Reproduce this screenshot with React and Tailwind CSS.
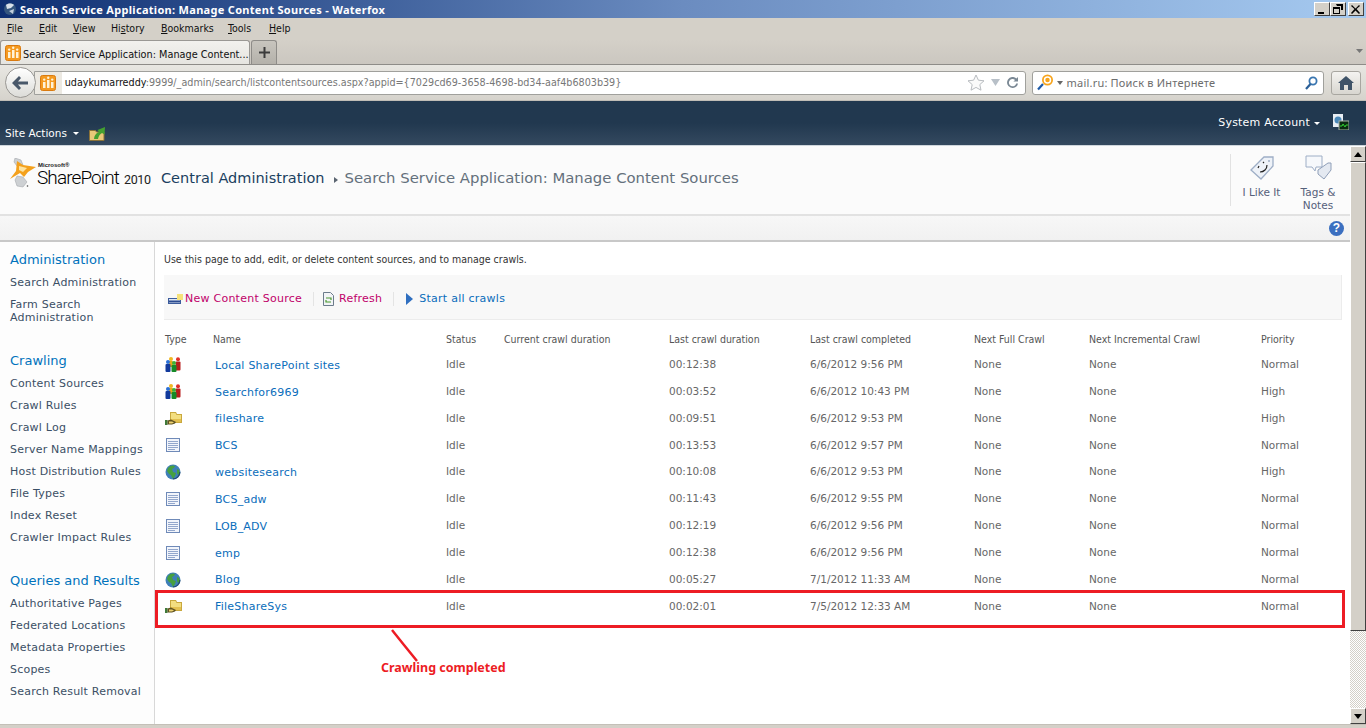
import React from "react";

const Verdana = { fontFamily: '"DejaVu Sans", sans-serif' };
const Tahoma = { fontFamily: '"DejaVu Sans Condensed", "DejaVu Sans", sans-serif', fontStretch: "condensed" };

function PeopleIcon() {
  return (
    <svg width="16" height="15" viewBox="0 0 16 15">
      <circle cx="6" cy="2" r="2" fill="#f0b820" />
      <rect x="4" y="4" width="4" height="6" rx="1" fill="#e8a818" />
      <circle cx="13" cy="2.200" r="2" fill="#e03028" />
      <rect x="10.500" y="4.500" width="5" height="9" rx="1" fill="#b81c1c" />
      <circle cx="3" cy="5" r="2" fill="#2a70d8" />
      <rect x="0.500" y="7" width="5" height="8" rx="1" fill="#123a9c" />
      <circle cx="9" cy="6" r="2" fill="#40b038" />
      <rect x="6.500" y="8" width="5" height="7" rx="1" fill="#168a28" />
    </svg>
  );
}

function ShareIcon() {
  return (
    <svg width="17" height="15" viewBox="0 0 17 15">
      <path d="M5 1h6l1 2h5v9H5z" fill="#c9a83e" />
      <path d="M6 2h4.500l1 2H16v7H6z" fill="#f3de80" />
      <path d="M6 8h10v3H6z" fill="#e3c050" />
      <path d="M0 9h2.500v5H0z" fill="#3f7a3a" />
      <path d="M2.500 9.500L6 8.500l3 1.500 2 1-1 1.500-3 1H2.500z" fill="#5f5220" />
      <path d="M4 10.500h3l2 1-2 1H4z" fill="#ecd070" />
    </svg>
  );
}

function DocIcon() {
  return (
    <svg width="14" height="14" viewBox="0 0 14 14" className="ml-[1px]">
      <rect x="0.500" y="0.500" width="13" height="13" fill="#f2f5fb" stroke="#6f8ab8" />
      <path d="M2 3.500h10M2 5.500h10M2 7.500h10M2 9.500h10M2 11.500h7" stroke="#93a7cc" strokeWidth="1" />
    </svg>
  );
}

function GlobeIcon() {
  return (
    <svg width="16" height="16" viewBox="0 0 16 16">
      <circle cx="8" cy="8" r="7.500" fill="#3f7fb8" />
      <path d="M3 4c2-3 6-3 7-2L9 4 7 5l1 3 3 1-1 3-2 3-2-4-2-1-2-3z" fill="#46a040" />
      <path d="M12 5l2 1 1 3-2 2-1-2z" fill="#46a040" />
      <path d="M8 15.500a7.500 7.500 0 0 0 7.500-7.500h-1.200A6.300 6.300 0 0 1 8 14.300z" fill="#1e3f66" opacity="0.8" />
    </svg>
  );
}

function AppFavicon({ size = 16 }) {
  return (
    <svg width={size} height={size} viewBox="0 0 16 16" className="shrink-0">
      <rect x="0.500" y="0.500" width="15" height="15" rx="2" fill="#f59a20" stroke="#d97a10" />
      <rect x="3" y="7" width="2.500" height="6" fill="#fff3d8" />
      <rect x="7" y="5" width="2.500" height="8" fill="#fff3d8" />
      <rect x="11" y="7" width="2.500" height="6" fill="#fff3d8" />
      <circle cx="4.200" cy="4.600" r="1.200" fill="#fff3d8" />
      <circle cx="8.200" cy="2.800" r="1.200" fill="#fff3d8" />
      <circle cx="12.200" cy="4.600" r="1.200" fill="#fff3d8" />
    </svg>
  );
}

function U({ children }) {
  return <span className="underline underline-offset-1">{children}</span>;
}

function TitleBar() {
  return (
    <div className="h-[18px] flex items-center bg-gradient-to-r from-[#0f2f72] via-[#6b8cc0] to-[#a6caf0] pr-[2px]">
      <svg className="ml-[3px]" width="14" height="14" viewBox="0 0 14 14">
        <circle cx="7" cy="7" r="6" fill="#35567f" />
        <path d="M3 3c2-2 6-2 8 0L8 6 4 7z" fill="#d8e0ea" />
        <path d="M6 9l5-2-1 5z" fill="#c4d0de" />
      </svg>
      <span className="ml-[3px] text-[11px] font-bold leading-none text-white tracking-[0.3px]" style={{ fontFamily: '"Noto Sans", sans-serif' }}>
        Search Service Application: Manage Content Sources - Waterfox
      </span>
      <div className="ml-auto flex items-center gap-0">
        {[
          <path key="a" d="M2 9h6v2H2z" fill="#000" />,
          <path key="b" d="M4 1h7v6H9V3H5zM1 4h7v7H1zm1 2v4h5V6z" fill="#000" fillRule="evenodd" />,
          <path key="c" d="M2 2l3.500 3.500L9 2l1 1-3.500 3L10 10l-1 1-3.500-3.500L2 11l-1-1 3.500-4L1 3z" fill="#000" />,
        ].map((p, i) => (
          <span key={i} className={`h-[14px] ${i === 1 ? "w-[16px] mr-[2px]" : "w-[16px]"} bg-[#d4d0c8] border border-t-white border-l-white border-r-[#404040] border-b-[#404040] flex items-center justify-center`}>
            <svg width="12" height="12" viewBox="0 0 12 12">{p}</svg>
          </span>
        ))}
      </div>
    </div>
  );
}

function MenuBar() {
  return (
    <div className="h-[22px] bg-[#d4d0c8] flex items-center pl-[7px] text-[10.500px] text-[#111]" style={Tahoma}>
      <span className="w-[32px]"><U>F</U>ile</span>
      <span className="w-[34px]"><U>E</U>dit</span>
      <span className="w-[38px]"><U>V</U>iew</span>
      <span className="w-[50px]">Hi<U>s</U>tory</span>
      <span className="w-[67px]"><U>B</U>ookmarks</span>
      <span className="w-[41px]"><U>T</U>ools</span>
      <span><U>H</U>elp</span>
    </div>
  );
}

function TabBar() {
  return (
    <div className="h-[25px] bg-gradient-to-b from-[#d4d0c8] to-[#cbc7c0] border-b border-[#8e8c88] flex items-end relative">
      <div className="h-[24px] w-[250px] shrink-0 overflow-hidden bg-gradient-to-b from-[#f2f1ee] to-[#e6e5e0] border border-b-0 border-[#9a9894] rounded-t-[3px] flex items-center pl-[4px] gap-[2px]">
        <AppFavicon />
        <span className="text-[10.800px] leading-[13px] pt-[3px] text-[#111] whitespace-nowrap" style={Tahoma}>
          Search Service Application: Manage Content...
        </span>
      </div>
      <div className="h-[24px] w-[26px] ml-[1px] bg-gradient-to-b from-[#c8c5be] to-[#b4b1aa] border border-b-0 border-[#8e8c88] rounded-t-[3px] flex items-center justify-center">
        <svg width="11" height="11" viewBox="0 0 11 11"><path d="M4.500 0h2v4.500H11v2H6.500V11h-2V6.500H0v-2h4.500z" fill="#3c3c3c" /></svg>
      </div>
      <svg className="ml-auto mr-[3px] mb-[11px]" width="7" height="4" viewBox="0 0 7 4"><path d="M0 0h7L3.500 4z" fill="#777" /></svg>
    </div>
  );
}

function NavBar() {
  return (
    <div className="h-[36px] bg-gradient-to-b from-[#e8e7e2] to-[#d6d3cc] border-b border-[#c0bdb6] flex items-center pl-[5px] pr-[5px]">
      <div className="relative z-10 w-[31px] h-[31px] rounded-full bg-gradient-to-b from-white to-[#dcdcd8] border border-[#9a9894] flex items-center justify-center">
        <svg width="16" height="14" viewBox="0 0 16 14"><path d="M7 0l2 2-3 3.500h10v3H6l3 3.500-2 2L0 7z" fill="#49586a" /></svg>
      </div>
      <div className="ml-[-2px] h-[24px] w-[1000px] bg-white border border-[#a0a09c] rounded-r-[3px] flex items-center">
        <span className="w-[27px] h-[22px] bg-[#ece9e2] flex items-center justify-center"><AppFavicon /></span>
        <span className="ml-[3px] text-[10.700px] pt-[1px] whitespace-nowrap text-[#777]" style={Tahoma}>
          <span className="text-[#111]">udaykumarreddy</span>:9999/_admin/search/listcontentsources.aspx?appid={"{"}7029cd69-3658-4698-bd34-aaf4b6803b39{"}"}
        </span>
        <div className="ml-auto flex items-center pr-[7px]">
          <svg width="18" height="17" viewBox="0 0 18 17"><path d="M9 1l2.400 5.200 5.600.6-4.200 3.800 1.200 5.600L9 13.400 4 16.200l1.200-5.600L1 6.800l5.600-.6z" fill="#fafafa" stroke="#b8bcc0" /></svg>
          <svg className="ml-[6px]" width="9" height="7" viewBox="0 0 9 7"><path d="M0 0h9L4.500 7z" fill="#b8c0c8" /></svg>
          <svg className="ml-[7px]" width="11" height="11" viewBox="0 0 12 12"><path d="M10 7a4 4 0 1 1-1.200-3.800L7 5h5V0l-1.700 1.700A6 6 0 1 0 12 7z" fill="#7a8894" /></svg>
        </div>
      </div>
      <div className="ml-[6px] h-[24px] w-[295px] bg-white border border-[#a0a09c] rounded-[3px] flex items-center pl-[4px] pr-[5px]">
        <svg width="17" height="17" viewBox="0 0 17 17">
          <circle cx="10.500" cy="6" r="5.500" fill="#f7a41c" />
          <circle cx="10.500" cy="6" r="3" fill="none" stroke="#fff" strokeWidth="1.500" />
          <path d="M6 10l-5 5.500" stroke="#1d5aa8" strokeWidth="2.200" />
        </svg>
        <svg className="ml-[3px]" width="6" height="4" viewBox="0 0 6 4"><path d="M0 0h6L3 4z" fill="#666" /></svg>
        <span className="ml-[4px] text-[11px] tracking-[0.2px] text-[#6d6d6d] whitespace-nowrap translate-y-[1px]" style={{ fontFamily: '"Noto Sans", sans-serif' }}>mail.ru: Поиск в Интернете</span>
        <svg className="ml-auto" width="13" height="14" viewBox="0 0 13 14">
          <circle cx="8" cy="5" r="3.600" fill="none" stroke="#3a76b0" strokeWidth="1.800" />
          <path d="M5.500 8L1 13" stroke="#2a5f98" strokeWidth="2.200" />
        </svg>
      </div>
      <div className="ml-[7px] h-[24px] w-[30px] bg-gradient-to-b from-[#f4f3f0] to-[#d8d6d0] border border-[#a8a6a0] rounded-[3px] flex items-center justify-center">
        <svg width="16" height="14" viewBox="0 0 16 14"><path d="M8 0l8 7h-2v7h-4V9H6v5H2V7H0z" fill="#3f5368" /></svg>
      </div>
    </div>
  );
}

function SiteBar() {
  return (
    <div className="h-[45px] bg-gradient-to-b from-[#21384f] via-[#21384f] to-[#34495f] flex text-[11px] text-white border-b border-[#cfd6dc]" style={Verdana}>
      <div className="pl-[5px] pt-[25px] flex items-start">
        <span className="text-[10.500px] leading-[15px]">Site Actions</span>
        <svg className="ml-[6px] mt-[6px]" width="6" height="3" viewBox="0 0 6 3"><path d="M0 0h6L3 3z" fill="#fff" /></svg>
        <svg className="ml-[10px] mt-[0px]" width="17" height="15" viewBox="0 0 17 15">
          <path d="M.5 4.500h6l1 1.500h7.500v8.500H.5z" fill="#e8c878" stroke="#8a7238" />
          <path d="M5 13c0-3 2-6 5-7L8.500 4 16 1l-.5 7.500L13 7c-2 1-3.500 3-4 6z" fill="#44a030" />
        </svg>
      </div>
      <div className="ml-auto pr-[17px] pt-[14px] flex items-start">
        <span className="tracking-[0.2px]">System Account</span>
        <svg className="ml-[4px] mt-[7px]" width="6" height="3" viewBox="0 0 6 3"><path d="M0 0h6L3 3z" fill="#fff" /></svg>
        <svg className="ml-[12px] mt-[-1px]" width="17" height="16" viewBox="0 0 17 16">
          <rect x="1" y="0" width="10" height="13" fill="#e8eef4" />
          <circle cx="6" cy="6" r="3.500" fill="#4a88b8" />
          <rect x="7" y="7" width="10" height="9" fill="#0a2a10" stroke="#aab4a8" />
          <path d="M8 12h2l1-2 2 3 1-2h2" stroke="#30d030" fill="none" />
        </svg>
      </div>
    </div>
  );
}

function SharePointLogo() {
  const logoFont = { fontFamily: 'Roboto, sans-serif' };
  return (
    <div className="relative w-[152px] h-[38px]">
      <svg width="28" height="30" viewBox="0 0 28 30" className="absolute left-[9px] top-[0px]">
        <path d="M6 0l6 2 2 5-6 1-3-4z" fill="#cdd0d3" stroke="#9a9ea2" strokeWidth="0.500" />
        <path d="M8 18l6 1 4 5-4 5-6-1-2-6z" fill="#cdd0d3" stroke="#9a9ea2" strokeWidth="0.500" />
        <path d="M8 3l6 4 13 2-8 5-4 5-4-4-10 6 6-8z" fill="#f4a11d" />
        <path d="M10 8l8 2-4 4-4-2z" fill="#fde3a0" />
        <circle cx="18.500" cy="28" r="0.800" fill="#444" />
      </svg>
      <span className="absolute left-[38px] top-[4px] text-[6px] font-bold leading-none text-[#222]" style={{ fontFamily: '"Liberation Sans", sans-serif' }}>Microsoft®</span>
      <span className="absolute left-[37px] top-[12px] text-[19px] leading-[15px] font-light text-black tracking-[-0.9px] whitespace-nowrap" style={logoFont}>
        SharePoint
      </span>
      <span className="absolute left-[124px] top-[15px] text-[12.500px] leading-[13px] text-[#222] tracking-[-0.4px]" style={logoFont}>2010</span>
    </div>
  );
}

function HeaderArea() {
  return (
    <div>
      <div className="h-[70px] bg-[#fbfbfb] border-b-2 border-[#e2e2e2] flex" style={Verdana}>
        <div className="pt-[12px]"><SharePointLogo /></div>
        <div className="ml-[9px] pt-[23px] flex items-start leading-[18px] whitespace-nowrap">
          <span className="text-[14.500px] text-[#1a3f5f]">Central Administration</span>
          <svg className="ml-[9px] mt-[8px]" width="4" height="6" viewBox="0 0 4 6"><path d="M0 0l4 3-4 3z" fill="#5a6470" /></svg>
          <span className="ml-[7px] text-[14.850px] text-[#64707c]">Search Service Application: Manage Content Sources</span>
        </div>
        <div className="ml-auto my-[8px] w-[120px] border-l border-[#e2e2e2] flex text-[10.500px] text-[#55607a] text-center leading-[13px]">
          <div className="w-[61px] flex flex-col items-center">
            <svg width="26" height="28" viewBox="0 0 26 28" className="shrink-0">
              <path d="M2 16L15 3l9 0 0 9-12 13z" fill="#eef2f8" stroke="#9eaec6" strokeWidth="1.300" />
              <circle cx="20" cy="7" r="1" fill="#9eaec6" />
              <path d="M9 14l1-2M14 9l1-1M11 18c4 0 7-3 7-7" stroke="#222" strokeWidth="1.200" fill="none" />
            </svg>
            <span className="mt-[4px]">I Like It</span>
          </div>
          <div className="w-[52px] flex flex-col items-center">
            <svg width="28" height="28" viewBox="0 0 28 28" className="shrink-0">
              <path d="M2 2h16v11h-6l-1 4-3-4H2z" fill="#f6f8fb" stroke="#9eaec6" />
              <path d="M14 20v-4l10-7 3 0 0 7-7 9z" fill="#e4e9f1" stroke="#8f9fb8" />
            </svg>
            <span className="mt-[4px]">Tags &<br />Notes</span>
          </div>
        </div>
      </div>
      <div className="h-[26px] bg-gradient-to-b from-[#f7f7f7] to-[#f1f1f1] border-b-2 border-[#c8c8c8] flex items-center justify-end pr-[6px]">
        <span className="w-[15px] h-[15px] rounded-full bg-[#3b6fc0] text-white text-[12px] font-bold leading-[15px] text-center" style={{ fontFamily: '"Liberation Sans", sans-serif' }}>?</span>
      </div>
    </div>
  );
}

function Heading({ children, className = "" }) {
  return <div className={`text-[13px] leading-[16px] text-[#0072bc] ${className}`}>{children}</div>;
}

function NavItem({ children, first }) {
  return <div className={`text-[11px] leading-[13px] text-[#3b4f65] tracking-[0.22px] ${first ? "mt-[8px]" : "mt-[9px]"}`}>{children}</div>;
}

function LeftNav() {
  return (
    <div className="w-[155px] shrink-0 border-r border-[#d8d8d8] bg-[#fdfdfd] pl-[10px] pt-[10px] whitespace-nowrap" style={Verdana}>
      <Heading>Administration</Heading>
      <NavItem first>Search Administration</NavItem>
      <NavItem>Farm Search<br />Administration</NavItem>
      <Heading className="mt-[29px]">Crawling</Heading>
      <NavItem first>Content Sources</NavItem>
      <NavItem>Crawl Rules</NavItem>
      <NavItem>Crawl Log</NavItem>
      <NavItem>Server Name Mappings</NavItem>
      <NavItem>Host Distribution Rules</NavItem>
      <NavItem>File Types</NavItem>
      <NavItem>Index Reset</NavItem>
      <NavItem>Crawler Impact Rules</NavItem>
      <Heading className="mt-[29px]">Queries and Results</Heading>
      <NavItem first>Authoritative Pages</NavItem>
      <NavItem>Federated Locations</NavItem>
      <NavItem>Metadata Properties</NavItem>
      <NavItem>Scopes</NavItem>
      <NavItem>Search Result Removal</NavItem>
    </div>
  );
}

const rows = [
  ["people", "Local SharePoint sites", "00:12:38", "6/6/2012 9:56 PM", "Normal"],
  ["people", "Searchfor6969", "00:03:52", "6/6/2012 10:43 PM", "High"],
  ["share", "fileshare", "00:09:51", "6/6/2012 9:53 PM", "High"],
  ["doc", "BCS", "00:13:53", "6/6/2012 9:57 PM", "Normal"],
  ["globe", "websitesearch", "00:10:08", "6/6/2012 9:53 PM", "High"],
  ["doc", "BCS_adw", "00:11:43", "6/6/2012 9:55 PM", "Normal"],
  ["doc", "LOB_ADV", "00:12:19", "6/6/2012 9:56 PM", "Normal"],
  ["doc", "emp", "00:12:38", "6/6/2012 9:56 PM", "Normal"],
  ["globe", "Blog", "00:05:27", "7/1/2012 11:33 AM", "Normal"],
  ["share", "FileShareSys", "00:02:01", "7/5/2012 12:33 AM", "Normal"],
];

const cols = "grid grid-cols-[48px_233px_58px_165px_141px_164px_115px_172px_80px]";

function TypeIcon({ type }) {
  if (type === "people") return <PeopleIcon />;
  if (type === "share") return <ShareIcon />;
  if (type === "doc") return <DocIcon />;
  return <GlobeIcon />;
}

function Row({ row }) {
  const [type, name, dur, completed, pri] = row;
  return (
    <div className={`${cols} h-[26.850px] pl-[10px] items-center text-[10.500px] text-[#676767]`} style={Verdana}>
      <span className="flex items-center"><TypeIcon type={type} /></span>
      <span className="pl-[2px] text-[11px] tracking-[0.23px] text-[#0a6dbb] translate-y-[1px]">{name}</span>
      <span>Idle</span>
      <span />
      <span>{dur}</span>
      <span>{completed}</span>
      <span>None</span>
      <span>None</span>
      <span>{pri}</span>
    </div>
  );
}

function Content() {
  return (
    <div className="flex-1 min-w-0 relative bg-white">
      <div className="pl-[9px] pt-[11px] text-[10.500px] leading-[13px] text-[#333] h-[33px]" style={Tahoma}>
        Use this page to add, edit, or delete content sources, and to manage crawls.
      </div>
      <div className="ml-[9px] mr-[8px] h-[45px] bg-[#f8f8f8] border-b border-r border-[#ececec] flex items-center pl-[4px] pt-[4px] text-[11px] tracking-[0.25px]" style={Verdana}>
        <svg width="15" height="11" viewBox="0 0 15 11">
          <rect x="0.500" y="4.500" width="12" height="5" fill="#dfe8f4" stroke="#3c5c9c" />
          <path d="M1 7.500h11" stroke="#2a4a90" strokeWidth="2" />
          <rect x="9" y="0" width="6" height="6" fill="#f6e27a" />
        </svg>
        <span className="ml-[2px] text-[#c0006a]">New Content Source</span>
        <span className="ml-[11px] h-[14px] w-px bg-[#e4e4e4]" />
        <svg className="ml-[9px]" width="11" height="14" viewBox="0 0 11 14">
          <path d="M.5.500h7l3 3v10H.5z" fill="#f2f4f6" stroke="#6c7c8c" />
          <path d="M3 6h5v2M8 10H3V8" stroke="#4a9a30" fill="none" strokeWidth="1.200" />
        </svg>
        <span className="ml-[5px] text-[#c0006a]">Refresh</span>
        <span className="ml-[11px] h-[14px] w-px bg-[#e4e4e4]" />
        <svg className="ml-[12px]" width="7" height="12" viewBox="0 0 7 12"><path d="M0 0l7 6-7 6z" fill="#2f6fc0" /></svg>
        <span className="ml-[6px] text-[#0a6dbb]">Start all crawls</span>
      </div>
      <div className={`${cols} mt-[9px] h-[21px] pl-[10px] items-center text-[10.500px] text-[#555]`} style={Tahoma}>
        <span>Type</span><span>Name</span><span>Status</span><span>Current crawl duration</span><span>Last crawl duration</span><span>Last crawl completed</span><span>Next Full Crawl</span><span>Next Incremental Crawl</span><span>Priority</span>
      </div>
      <div className="mt-[1.500px]">
        {rows.map((r) => <Row key={r[1]} row={r} />)}
      </div>
      {/* annotation drawn over the table */}
      <div className="absolute left-[0px] top-[348px] w-[1190px] h-[38px] border-[3px] border-[#ed1c24]" />
      <svg className="absolute left-[235px] top-[386px]" width="32" height="36" viewBox="0 0 32 36">
        <path d="M2 2l12 15 13 16" stroke="#ed1c24" strokeWidth="2.500" fill="none" />
      </svg>
      <div className="absolute left-[226px] top-[417px] text-[12.500px] font-bold leading-[17px] text-[#ed1c24] whitespace-nowrap" style={{ fontFamily: '"Noto Sans", sans-serif' }}>
        Crawling completed
      </div>
    </div>
  );
}

function Scrollbar() {
  const btn = "w-[16px] h-[16px] bg-[#d4d0c8] border border-t-white border-l-white border-r-[#404040] border-b-[#404040] flex items-center justify-center shrink-0";
  return (
    <div className="w-[16px] shrink-0 flex flex-col bg-[#eeece8]">
      <div className={btn}><svg width="8" height="5" viewBox="0 0 8 5"><path d="M0 5h8L4 0z" fill="#000" /></svg></div>
      <div className="h-[469px] bg-[#d4d0c8] border border-t-white border-l-white border-r-[#404040] border-b-[#404040]" />
      <div className="flex-1 bg-[repeating-conic-gradient(#d4d0c8_0%_25%,#ffffff_0%_50%)] bg-[length:2px_2px]" />
      <div className={btn}><svg width="8" height="5" viewBox="0 0 8 5"><path d="M0 0h8L4 5z" fill="#000" /></svg></div>
    </div>
  );
}

export default function App() {
  return (
    <div className="w-[1366px] h-[728px] overflow-hidden flex flex-col bg-white">
      <TitleBar />
      <MenuBar />
      <TabBar />
      <NavBar />
      <SiteBar />
      <div className="flex flex-1 min-h-0">
        <div className="flex-1 min-w-0 flex flex-col">
          <HeaderArea />
          <div className="flex flex-1 min-h-0">
            <LeftNav />
            <Content />
          </div>
        </div>
        <Scrollbar />
      </div>
      <div className="h-[4px] shrink-0 bg-[#d4d0c8] border-t border-[#c4c0b8]" />
    </div>
  );
}
